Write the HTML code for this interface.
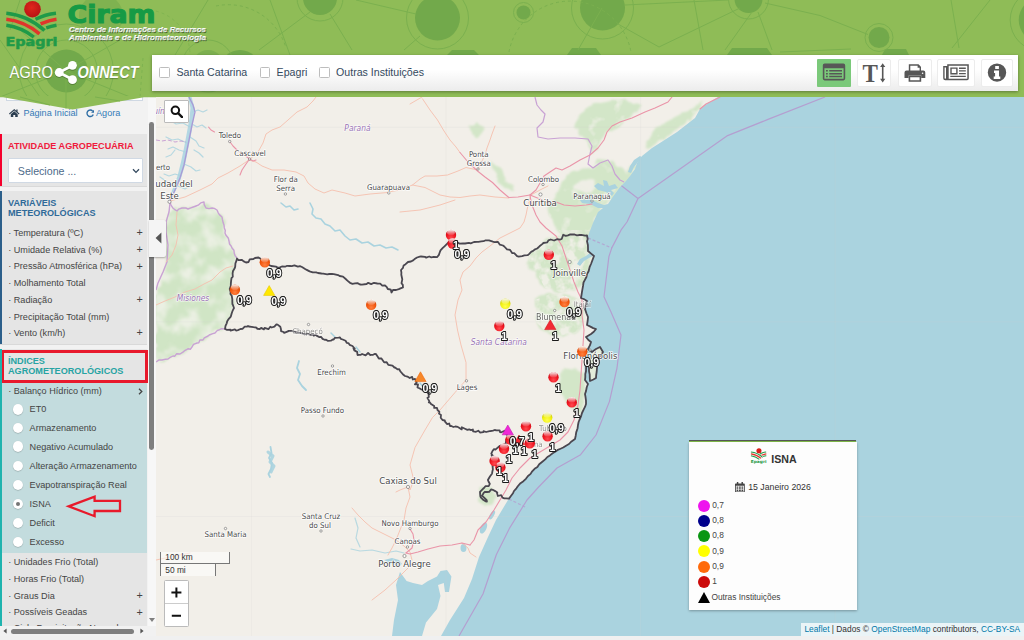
<!DOCTYPE html>
<html lang="pt-br">
<head>
<meta charset="utf-8">
<title>Agroconnect - Epagri/Ciram</title>
<style>
*{box-sizing:border-box;margin:0;padding:0}
html,body{width:1024px;height:640px;overflow:hidden;background:#f0f0f0;font-family:"Liberation Sans",Arial,sans-serif;}
.abs{position:absolute}
#page{position:relative;width:1024px;height:640px;overflow:hidden;background:#f0f0f0}
/* header */
#header{position:absolute;left:0;top:0;width:1024px;height:97px;background:#8fbc57;overflow:hidden;z-index:5}
#hv{position:absolute;left:0;top:96px;width:156px;height:16px;z-index:6}
#toolbar{position:absolute;left:152px;top:54.5px;width:865.8px;height:36.3px;background:linear-gradient(#ffffff 40%,#ececec);box-shadow:0 1px 3px rgba(0,0,0,.35);z-index:7}
.cb{position:absolute;top:12.3px;width:10.6px;height:10.8px;border:1px solid #bdbdbd;background:#fff;border-radius:1.5px}
.cbl{position:absolute;top:9.3px;font-size:10.64px;color:#34495e;line-height:16px;white-space:nowrap}
.tb{position:absolute;top:5px;width:36px;height:27px;background:#fff;border-radius:2px;}
/* sidebar */
#side{position:absolute;left:0;top:97px;width:156px;height:543px;background:#f2f2f2;z-index:3;overflow:hidden}
#sidein{position:absolute;left:0;top:0;width:147.5px;height:529px;overflow:hidden}
.sec{position:absolute;left:0;width:147px;background:#e5e5e5;border-bottom:1px solid #d9d9d9}
.sec .bar{position:absolute;left:0;top:0;bottom:0;width:2px}
.stitle{position:absolute;left:8px;font-weight:bold;font-size:9.12px;line-height:10.4px;white-space:nowrap}
.it{position:absolute;left:8.2px;font-size:9.12px;line-height:12px;color:#444;white-space:nowrap}
.plus{position:absolute;left:136.4px;font-size:10.8px;line-height:12px;color:#444;font-weight:normal}
.radio{position:absolute;left:12.7px;width:10.6px;height:10.6px;border-radius:50%;background:#fff;box-shadow:0 .5px 1px rgba(0,0,0,.3)}
.radio i{position:absolute;left:3.15px;top:3.15px;width:4.3px;height:4.3px;border-radius:50%;background:#757575}
.rl{position:absolute;left:29.6px;font-size:9.12px;line-height:12px;color:#444;white-space:nowrap}
/* map */
#map{position:absolute;left:156px;top:97px;width:868px;height:539px;background:#f2efe9;overflow:hidden;z-index:1}
#legend{position:absolute;left:689px;top:441.5px;width:167.5px;height:168px;background:#fdfdfd;box-shadow:0 1px 2.5px rgba(0,0,0,.3);z-index:4}
.lc{position:absolute;left:9px;width:12px;height:12px;border-radius:50%}
.lt{position:absolute;left:23.2px;font-size:8.36px;line-height:12px;color:#444;white-space:nowrap}
.lf{position:absolute;background:rgba(255,255,255,.8);z-index:4}
</style>
</head>
<body>
<div id="page">

<!-- MAP -->
<div id="map">
<svg id="mapsvg" class="abs" style="left:0;top:0" width="868" height="539" viewBox="156 97 868 539">
<defs><filter id="gb" x="-10%" y="-10%" width="120%" height="120%"><feTurbulence type="fractalNoise" baseFrequency=".09" numOctaves="2" seed="4" result="n"/><feDisplacementMap in="SourceGraphic" in2="n" scale="9" xChannelSelector="R" yChannelSelector="G" result="d"/><feGaussianBlur in="d" stdDeviation=".9"/></filter><filter id="gp" x="0" y="0" width="100%" height="100%"><feTurbulence type="fractalNoise" baseFrequency=".07" numOctaves="3" seed="9" result="n"/><feColorMatrix in="n" type="matrix" values="0 0 0 0 0  0 0 0 0 0  0 0 0 0 0  3.5 0 0 0 -2.05" result="m"/><feComposite in="SourceGraphic" in2="m" operator="in"/><feGaussianBlur stdDeviation=".7"/></filter><filter id="gp3" x="0" y="0" width="100%" height="100%"><feTurbulence type="fractalNoise" baseFrequency=".1" numOctaves="3" seed="33" result="n"/><feColorMatrix in="n" type="matrix" values="0 0 0 0 0  0 0 0 0 0  0 0 0 0 0  4 0 0 0 -1.55" result="m"/><feComposite in="SourceGraphic" in2="m" operator="in"/><feGaussianBlur stdDeviation=".6"/></filter><filter id="gp2" x="0" y="0" width="100%" height="100%"><feTurbulence type="fractalNoise" baseFrequency=".06" numOctaves="3" seed="21" result="n"/><feColorMatrix in="n" type="matrix" values="0 0 0 0 0  0 0 0 0 0  0 0 0 0 0  3.2 0 0 0 -1.35" result="m"/><feComposite in="SourceGraphic" in2="m" operator="in"/><feGaussianBlur stdDeviation=".8"/></filter></defs>
<g filter="url(#gb)">
<path d="M172.0 208.0 L188.0 209.0 L204.0 203.0 L217.0 210.0 L223.0 218.0 L225.0 233.0 L232.0 248.0 L237.0 259.0 L233.0 272.0 L230.0 290.0 L234.0 305.0 L229.0 318.0 L225.0 329.0 L215.0 331.0 L207.0 337.0 L195.0 345.0 L185.0 352.0 L172.0 358.0 L156.0 364.0 L156.0 300.0 L160.0 280.0 L166.0 262.0 L166.0 230.0 L169.0 212.0Z" fill="#d0e5c5"/>
<path d="M555.0 198.0 L560.0 183.0 L571.0 172.0 L589.0 170.0 L599.0 160.0 L615.0 162.0 L626.0 172.0 L640.0 158.0 L634.0 172.0 L622.0 186.0 L610.0 201.0 L598.0 213.0 L592.0 226.0 L589.0 239.0 L563.0 236.0 L558.0 229.0 L550.0 219.0 L547.0 206.0Z" fill="#d3e6c8"/>
<path d="M581.0 110.0 L600.0 103.0 L620.0 99.0 L641.0 105.0 L626.0 121.0 L605.0 134.0 L598.0 146.0 L594.0 154.0 L584.0 137.0 L573.0 128.0Z" fill="#d3e6c8"/>
<path d="M655.0 128.0 L672.0 119.0 L692.0 109.0 L704.0 100.0 L700.0 108.0 L690.0 120.0 L672.0 133.0 L658.0 142.0 L648.0 150.0 L645.0 140.0Z" fill="#d3e6c8"/>
<path d="M470.0 124.0 L478.0 122.0 L484.0 130.0 L480.0 138.0 L472.0 134.0Z" fill="#d3e6c8"/>
<path d="M490.0 160.0 L500.0 168.0 L506.0 178.0 L514.0 186.0 L512.0 192.0 L502.0 184.0 L494.0 172.0Z" fill="#d3e6c8"/>
<path d="M530.0 252.0 L545.0 241.0 L563.0 236.0 L587.0 236.0 L592.0 258.0 L586.0 280.0 L575.0 290.0 L560.0 292.0 L545.0 288.0 L538.0 275.0 L528.0 268.0Z" fill="#d3e6c8"/>
<path d="M535.0 300.0 L550.0 294.0 L566.0 296.0 L580.0 300.0 L584.0 318.0 L578.0 332.0 L562.0 338.0 L548.0 334.0 L536.0 322.0Z" fill="#d3e6c8"/>
<path d="M560.0 372.0 L575.0 368.0 L584.0 372.0 L585.0 395.0 L582.0 412.0 L570.0 408.0 L562.0 395.0Z" fill="#d3e6c8"/>
<path d="M480.0 488.0 L492.0 486.0 L498.0 496.0 L490.0 508.0 L478.0 502.0Z" fill="#d3e6c8"/>
<ellipse cx="586" cy="186" rx="11" ry="7" fill="#efeee6"/>
</g>
<clipPath id="gc"><path d="M172.0 208.0 L188.0 209.0 L204.0 203.0 L217.0 210.0 L223.0 218.0 L225.0 233.0 L232.0 248.0 L237.0 259.0 L233.0 272.0 L230.0 290.0 L234.0 305.0 L229.0 318.0 L225.0 329.0 L215.0 331.0 L207.0 337.0 L195.0 345.0 L185.0 352.0 L172.0 358.0 L156.0 364.0 L156.0 300.0 L160.0 280.0 L166.0 262.0 L166.0 230.0 L169.0 212.0Z"/><path d="M555.0 198.0 L560.0 183.0 L571.0 172.0 L589.0 170.0 L599.0 160.0 L615.0 162.0 L626.0 172.0 L640.0 158.0 L634.0 172.0 L622.0 186.0 L610.0 201.0 L598.0 213.0 L592.0 226.0 L589.0 239.0 L563.0 236.0 L558.0 229.0 L550.0 219.0 L547.0 206.0Z"/><path d="M581.0 110.0 L600.0 103.0 L620.0 99.0 L641.0 105.0 L626.0 121.0 L605.0 134.0 L598.0 146.0 L594.0 154.0 L584.0 137.0 L573.0 128.0Z"/><path d="M655.0 128.0 L672.0 119.0 L692.0 109.0 L704.0 100.0 L700.0 108.0 L690.0 120.0 L672.0 133.0 L658.0 142.0 L648.0 150.0 L645.0 140.0Z"/><path d="M470.0 124.0 L478.0 122.0 L484.0 130.0 L480.0 138.0 L472.0 134.0Z"/><path d="M490.0 160.0 L500.0 168.0 L506.0 178.0 L514.0 186.0 L512.0 192.0 L502.0 184.0 L494.0 172.0Z"/><path d="M530.0 252.0 L545.0 241.0 L563.0 236.0 L587.0 236.0 L592.0 258.0 L586.0 280.0 L575.0 290.0 L560.0 292.0 L545.0 288.0 L538.0 275.0 L528.0 268.0Z"/><path d="M535.0 300.0 L550.0 294.0 L566.0 296.0 L580.0 300.0 L584.0 318.0 L578.0 332.0 L562.0 338.0 L548.0 334.0 L536.0 322.0Z"/><path d="M560.0 372.0 L575.0 368.0 L584.0 372.0 L585.0 395.0 L582.0 412.0 L570.0 408.0 L562.0 395.0Z"/><path d="M480.0 488.0 L492.0 486.0 L498.0 496.0 L490.0 508.0 L478.0 502.0Z"/></clipPath>
<g clip-path="url(#gc)"><g filter="url(#gp2)" fill="#ebf0e3"><path d="M156 200 H245 V370 H156Z"/></g><g filter="url(#gp)" fill="#ecefe3"><path d="M545 100 H705 V240 H545Z"/></g><g filter="url(#gp3)" fill="#eeefe5"><path d="M520 230 H600 V345 H520Z"/></g></g>
<path d="M718.0 97.0 L708.0 103.0 L700.0 109.0 L695.0 118.0 L686.0 125.0 L677.0 132.0 L663.0 141.0 L652.0 148.0 L642.0 156.0 L637.0 163.0 L635.0 169.0 L630.0 176.0 L626.0 181.0 L620.0 187.0 L612.0 198.0 L608.0 204.0 L598.0 212.0 L593.0 223.0 L588.0 236.0 L588.0 251.0 L594.0 256.0 L591.0 264.0 L587.0 274.0 L583.0 286.0 L581.0 298.0 L587.0 301.0 L585.0 309.0 L588.0 317.0 L587.0 325.0 L596.0 329.0 L591.0 334.0 L586.0 337.0 L591.0 342.0 L588.0 349.0 L584.0 359.0 L585.0 380.0 L588.0 384.0 L585.0 394.0 L586.0 404.0 L582.0 413.0 L578.0 425.0 L575.0 439.0 L569.0 444.0 L553.0 453.0 L542.0 462.0 L528.0 476.0 L518.0 486.0 L508.0 500.0 L496.0 520.0 L488.0 537.0 L479.0 557.0 L472.0 579.0 L464.0 598.0 L450.0 620.0 L441.0 636.0 L1024.0 636.0 L1024.0 97.0Z" fill="#aad3df"/>
<path d="M592.0 352.0 L596.0 349.0 L600.0 347.0 L603.0 352.0 L598.0 358.0 L597.0 368.0 L596.0 378.0 L590.0 381.0 L589.0 368.0 L590.0 358.0Z" fill="#f2efe9"/>
<path d="M592.0 352.0 L596.0 349.0 L600.0 347.0 L603.0 352.0 L598.0 358.0 L597.0 368.0 L596.0 378.0 L590.0 381.0 L589.0 368.0 L590.0 358.0Z" fill="#d9ead0" opacity=".6"/>
<path d="M400.0 572.0 L406.6 581.0 L413.0 583.0 L422.0 585.0 L428.0 581.0 L437.0 576.6 L440.5 571.0 L447.0 570.0 L451.4 576.6 L449.0 592.0 L445.0 592.0 L443.8 583.0 L438.0 585.0 L440.5 596.0 L437.0 609.0 L426.0 622.5 L422.0 636.0 L392.0 636.0 L394.0 620.0 L398.0 600.0 L396.0 585.0Z" fill="#aad3df"/>
<path d="M384 560 L392 558 L399 560 L402 564 L398 566 L390 563Z" fill="#aad3df"/>
<ellipse cx="483.5" cy="528" rx="3" ry="6" transform="rotate(25 483.5 528)" fill="#aad3df"/>
<ellipse cx="492" cy="515" rx="2" ry="5" transform="rotate(30 492 515)" fill="#aad3df"/>
<ellipse cx="463.5" cy="548" rx="3" ry="4" transform="rotate(0 463.5 548)" fill="#aad3df"/>
<path d="M612 196 L606 192 L598 190 L594 186 L598 183 L604 186 L603 180 L607 181 L609 186 L615 184 L618 188 L611 190 L614 193Z" fill="#aad3df"/>
<path d="M580 200 L590 199 L598 203 L604 205 L608 204 L606 208 L598 208 L590 204 L582 203Z" fill="#aad3df"/>
<path d="M640 156 L634 160 L630 166 L628 172 L631 173 L634 167 L638 162 L643 158Z" fill="#aad3df"/>
<path d="M591 252 L586 256 L580 259 L577 264 L580 266 L584 261 L589 258 L593 256Z" fill="#aad3df"/>
<path d="M188 97 L191.5 97 L195 109 L193.5 120 L191 135 L188 150 L185 165 L180.5 180 L175 192 L171 200 L168.5 199 L173 188 L177.500 176 L181 162 L184 148 L187 132 L189.500 118 L190.5 108Z" fill="#b3d7e3"/>
<path d="M193 112 L198 110 L203 112 L207 110 M192 124 L197 127 L202 125 L206 128 M190 137 L196 141 L199 146 L204 148 M186 152 L179 150 L173 147 L168 149 M184 164 L191 167 L196 171 L200 170 M181 176 L175 174 L169 176 L164 174 M187 143 L178 139 L172 140 L166 137 M190 127 L183 123 L176 124 L171 121 M178 186 L185 189 L190 186 M160 177 L166 181 L171 185 M175 150 L171 155 L166 157 M194 150 L199 153 L203 157" stroke="#aad3df" fill="none" stroke-linecap="round" stroke-linejoin="round" stroke-width="1.2" opacity=".85"/>
<path d="M281 203 L286 207 L290 206 L294 210 L298 209 M310 203 L313 209 L312 214 L316 218 L321 219 L325 224 L330 226 L335 231 L340 230 L345 236 L350 240 L356 239 L362 243 L368 242 L374 246 L380 245 L386 248 L392 247 L398 250" stroke="#aad3df" fill="none" stroke-linecap="round" stroke-linejoin="round" stroke-width="1.6"/>
<path d="M299 361 L297 368 L300 374 L298 380 L302 386 L306 390 M270.5 447 L271.5 453 L269 458 L272 463 L271 469 L268.500 474 L270 477" stroke="#aad3df" fill="none" stroke-linecap="round" stroke-linejoin="round" stroke-width="1.8"/>
<path d="M331 333 L335 337 M356 347 L360 352 M420 383 L424 388" stroke="#aad3df" fill="none" stroke-linecap="round" stroke-linejoin="round" stroke-width="1.5"/>
<path d="M351 549 L360 551 L372 550 L385 553 L396 551 L404 553 M355 518 L358 528 L356 538 L360 547" stroke="#aad3df" fill="none" stroke-linecap="round" stroke-linejoin="round" stroke-width="1.2" opacity=".8"/>
<path d="M268 452 L273 456 L270 462 L274 466 L271 472" stroke="#aad3df" fill="none" stroke-linecap="round" stroke-linejoin="round" stroke-width="3" opacity=".9"/>
<path d="M251.4 97 V636 M446 97 V636 M640.6 97 V636 M835.2 97 V636 M156 127.3 H1024 M156 321.9 H1024 M156 516.5 H1024" stroke="#d0d0d0" stroke-opacity=".2" stroke-width=".9" fill="none"/>
<path d="M189 97 L193 105 L195 112 L192 125 L190 135 L187 150 L184 165 L180 178 L175 190 L170 201" stroke="#a99ad6" stroke-width="1.3" fill="none"/>
<path d="M170.0 202.0 L171.0 205.0 L172.6 207.7 L174.4 209.3 L177.0 211.0 L178.8 209.1 L182.0 208.0 L185.8 208.0 L188.0 209.0 L190.9 207.9 L193.3 207.0 L196.0 206.0 L198.2 205.2 L200.7 202.9 L204.0 202.0 L204.2 204.6 L206.0 208.0 L208.9 208.6 L212.0 208.0 L214.3 208.4 L217.0 210.0 L218.3 213.1 L219.6 214.9 L222.0 217.0 L222.5 219.9 L223.1 222.6 L224.0 225.0 L224.3 227.9 L225.3 230.5 L225.0 233.0 L225.8 235.0 L228.4 238.3 L229.0 241.0 L229.5 244.0 L231.1 246.0 L232.0 248.0 L233.9 250.2 L234.3 253.6 L235.2 255.9 L237.0 258.0" stroke="#c9a2d4" fill="none" stroke-linejoin="round" stroke-width="1.4"/>
<path d="M225.0 329.0 L221.5 328.6 L219.0 330.0 L217.4 330.4 L215.0 333.0 L212.8 333.7 L209.2 335.0 L208.0 336.0 L204.3 337.8 L203.0 340.0 L199.9 339.9 L198.8 342.8 L197.0 343.0 L193.5 344.3 L192.0 347.0 L190.3 349.2 L188.2 348.7 L186.0 350.0 L185.2 350.2 L182.9 352.1 L180.0 354.0 L176.7 353.7 L174.8 356.2 L173.0 356.0 L169.7 357.7 L168.0 359.0 L165.4 359.2 L162.0 360.0 L159.1 359.9 L156.0 362.0" stroke="#c9a2d4" fill="none" stroke-linejoin="round" stroke-width="1.4"/>
<path d="M170 203 L169 212 L166 222 L166 232 L168 245 L167 262 L163 272 L158 283 L156 290" stroke="#c9a2d4" fill="none" stroke-linejoin="round" stroke-width="1.4"/>
<path d="M156 140 L162 141 L168 140 L175 142 L181 141 L186 142" stroke="#c9a2d4" fill="none" stroke-linejoin="round" stroke-width="1" stroke-dasharray="4 2"/>
<path d="M535 97 L537 105 L541 110 L545 114 L543 122 L537 128 L538 137 L548 139 L560 138 L575 138 L588 139 L592 146 L590 154 L588 164 L593 168 L600 163 L608 160 L612 166 L615 174 L620 180 L624 182" stroke="#c9a2d4" fill="none" stroke-linejoin="round" stroke-width="1.2"/>
<path d="M825 97 L768 119.4 L727.6 135.6 L638 198.5 L627 222 L621.5 229.3 L611.8 247.9 L608.9 256.6 L604 296.7 L611 312 L621 335 L617 368 L609.4 401.6 L596 435 L580.6 454.7 L557 468 L537.7 488 L527 500 L509.4 528.4 L496.3 554.7 L483 594 L459 636" stroke="#b49fd0" fill="none" stroke-width="1.2" stroke-linejoin="round"/>
<path d="M621.5 185.8 L638 198.5" stroke="#b49fd0" fill="none" stroke-width="1.2" stroke-linejoin="round"/>
<path d="M588 238 L611.8 247.9 M509 499 L527 508" stroke="#b49fd0" fill="none" stroke-width="1.2" stroke-linejoin="round" stroke-dasharray="3 2" opacity=".8"/>
<path d="M170.0 201.0 L185.0 197.0 L200.0 190.0 L212.0 184.0 L218.0 178.0 L228.0 173.0 L240.0 166.0 L249.0 160.0" stroke="#f5c0ae" fill="none" stroke-width=".9" stroke-linejoin="round" stroke-linecap="round"/>
<path d="M249.0 160.0 L258.0 152.0 L263.0 143.0 L266.0 134.0 L272.0 130.0 L280.0 127.0 L288.0 120.0 L297.0 112.0 L307.0 107.0 L313.0 101.0 L316.0 97.0" stroke="#f5c0ae" fill="none" stroke-width=".9" stroke-linejoin="round" stroke-linecap="round"/>
<path d="M249.0 160.0 L256.0 162.0 L262.0 166.0 L272.0 170.0 L284.0 170.0 L296.0 172.0 L304.0 176.0 L308.0 183.0 L315.0 189.0 L324.0 193.0 L332.0 190.0 L345.0 193.0 L355.0 196.0 L370.0 194.0 L388.0 192.5" stroke="#f5c0ae" fill="none" stroke-width=".9" stroke-linejoin="round" stroke-linecap="round"/>
<path d="M388.0 192.0 L400.0 190.0 L412.5 185.0 L420.0 179.0 L425.0 176.0 L437.0 176.0 L447.5 175.0 L458.0 171.0 L466.0 167.5 L477.5 170.0" stroke="#f5c0ae" fill="none" stroke-width=".9" stroke-linejoin="round" stroke-linecap="round"/>
<path d="M412.5 185.0 L425.0 187.5 L432.0 191.0 L440.0 195.0 L450.0 197.0 L460.0 197.5 L470.0 196.0 L480.0 195.0 L495.0 197.0 L508.8 198.0" stroke="#f5c0ae" fill="none" stroke-width=".9" stroke-linejoin="round" stroke-linecap="round"/>
<path d="M422.5 98.8 L430.0 110.0 L437.5 120.0 L444.0 131.0 L450.0 140.0 L456.0 147.0 L460.0 152.5" stroke="#f5c0ae" fill="none" stroke-width=".9" stroke-linejoin="round" stroke-linecap="round"/>
<path d="M495.0 126.0 L492.0 134.0 L490.0 140.0 L487.0 148.0 L485.0 155.0 L481.0 163.0 L478.0 169.0" stroke="#f5c0ae" fill="none" stroke-width=".9" stroke-linejoin="round" stroke-linecap="round"/>
<path d="M422.0 97.0 L410.0 104.0" stroke="#f5c0ae" fill="none" stroke-width=".9" stroke-linejoin="round" stroke-linecap="round"/>
<path d="M531.0 195.0 L528.0 205.0 L526.0 215.0 L524.0 222.0 L520.0 228.0 L512.0 232.0 L500.0 238.0 L490.0 246.0 L482.0 252.0 L476.0 258.0 L470.0 266.0 L463.0 272.0 L460.0 280.0 L462.0 290.0 L458.0 300.0 L455.0 315.0 L457.5 330.0 L461.0 345.0 L466.0 362.5 L466.0 380.0 L455.0 392.5 L440.0 410.0 L432.5 417.5 L425.0 430.0 L415.0 447.5 L410.0 465.0 L413.8 480.0 L410.0 490.0 L408.0 487.0" stroke="#f5c0ae" fill="none" stroke-width=".9" stroke-linejoin="round" stroke-linecap="round"/>
<path d="M531.0 195.0 L540.0 190.0 L548.0 186.0" stroke="#f5c0ae" fill="none" stroke-width=".9" stroke-linejoin="round" stroke-linecap="round"/>
<path d="M400.0 212.0 L420.0 210.0 L440.0 205.0 L455.0 200.0" stroke="#f5c0ae" fill="none" stroke-width=".9" stroke-linejoin="round" stroke-linecap="round"/>
<path d="M156.0 305.0 L165.0 301.0 L175.0 297.0 L185.0 292.0 L195.0 289.0 L204.0 284.0 L212.0 280.0 L220.0 272.0 L226.0 268.0 L233.0 266.0" stroke="#f5c0ae" fill="none" stroke-width=".9" stroke-linejoin="round" stroke-linecap="round"/>
<path d="M166.0 262.0 L172.0 255.0 L176.0 245.0 L178.0 235.0 L176.0 225.0 L177.0 212.0" stroke="#f5c0ae" fill="none" stroke-width=".9" stroke-linejoin="round" stroke-linecap="round"/>
<path d="M408.0 487.0 L410.0 497.0 L406.0 508.0 L404.0 520.0 L400.0 530.0 L396.0 540.0 L392.0 548.0 L388.0 555.0" stroke="#f5c0ae" fill="none" stroke-width=".9" stroke-linejoin="round" stroke-linecap="round"/>
<path d="M352.0 508.0 L358.0 515.0 L365.0 522.0 L372.0 528.0 L380.0 532.0 L388.0 536.0 L396.0 540.0 L404.0 546.0 L410.0 552.0 L412.0 560.0" stroke="#f5c0ae" fill="none" stroke-width=".9" stroke-linejoin="round" stroke-linecap="round"/>
<path d="M408.0 487.0 L400.0 490.0 L396.0 492.0" stroke="#f5c0ae" fill="none" stroke-width=".9" stroke-linejoin="round" stroke-linecap="round"/>
<path d="M156.0 560.0 L175.0 556.0 L190.0 553.0" stroke="#f5c0ae" fill="none" stroke-width=".9" stroke-linejoin="round" stroke-linecap="round"/>
<path d="M372.0 600.0 L385.0 590.0 L396.0 580.0 L404.0 572.0 L410.0 566.0" stroke="#f5c0ae" fill="none" stroke-width=".9" stroke-linejoin="round" stroke-linecap="round"/>
<path d="M462.0 543.0 L468.0 548.0 L470.0 553.0 L476.0 557.0" stroke="#f5c0ae" fill="none" stroke-width=".9" stroke-linejoin="round" stroke-linecap="round"/>
<path d="M460.0 152.5 L468.0 162.0 L477.5 171.0 L485.0 177.0 L492.5 182.5 L500.0 190.0 L508.8 197.5 L518.0 197.0 L530.0 195.0" stroke="#ea94a8" fill="none" stroke-width="1.1" stroke-linejoin="round" stroke-linecap="round"/>
<path d="M530.0 195.0 L536.0 190.0 L540.0 183.0 L544.0 176.0 L550.0 172.0 L556.0 168.0 L562.0 170.0 L570.0 166.0 L580.0 160.0 L590.0 155.0 L598.0 148.0 L604.0 140.0 L607.0 132.0 L612.0 126.0 L620.0 122.0 L632.0 118.0 L645.0 112.0 L655.0 108.0 L668.0 102.0 L672.0 97.0" stroke="#ea94a8" fill="none" stroke-width="1.1" stroke-linejoin="round" stroke-linecap="round"/>
<path d="M530.0 195.0 L540.0 199.0 L548.0 203.0 L556.0 202.0 L564.0 205.0 L575.0 206.0 L586.0 205.0 L592.0 204.0" stroke="#ea94a8" fill="none" stroke-width="1.1" stroke-linejoin="round" stroke-linecap="round"/>
<path d="M530.0 196.0 L532.0 205.0 L536.0 215.0 L540.0 222.0 L546.0 228.0 L556.0 236.0 L562.0 246.0 L566.0 258.0 L570.0 270.0 L574.0 282.0 L578.0 292.0 L582.0 300.0 L582.0 315.0 L584.0 330.0 L583.0 345.0 L582.0 360.0 L581.0 375.0 L580.0 390.0 L578.0 405.0 L574.0 420.0 L568.0 432.0 L560.0 440.0 L550.0 446.0 L540.0 452.0 L530.0 458.0 L520.0 468.0 L512.0 478.0 L506.0 490.0 L500.0 500.0 L494.0 510.0 L486.0 522.0 L478.0 530.0 L474.0 540.0 L470.0 545.0" stroke="#ea94a8" fill="none" stroke-width="1.1" stroke-linejoin="round" stroke-linecap="round"/>
<path d="M470.0 545.0 L462.0 543.0 L452.0 545.0 L440.0 546.0 L428.0 549.0 L418.0 552.0 L410.0 554.0 L406.0 553.0" stroke="#ea94a8" fill="none" stroke-width="1.1" stroke-linejoin="round" stroke-linecap="round"/>
<path d="M406.0 553.0 L412.0 548.0 L414.0 540.0 L413.0 534.0 L410.0 529.0" stroke="#ea94a8" fill="none" stroke-width="1.1" stroke-linejoin="round" stroke-linecap="round"/>
<path d="M229.7 141.5 L233.0 146.0 L238.0 151.0 L243.0 154.0 L249.6 159.0 L253.0 161.0 L256.0 160.0" stroke="#ea94a8" fill="none" stroke-width="1.1" stroke-linejoin="round" stroke-linecap="round"/>
<path d="M249.6 159.0 L246.0 164.0 L242.0 170.0 L240.0 175.0" stroke="#ea94a8" fill="none" stroke-width="1.1" stroke-linejoin="round" stroke-linecap="round"/>
<path d="M208.6 127.2 L211.0 130.0 L214.5 132.0" stroke="#ea94a8" fill="none" stroke-width="1.1" stroke-linejoin="round" stroke-linecap="round"/>
<path d="M700.0 109.0 L706.0 104.0 L714.0 100.0 L720.0 97.0" stroke="#ea94a8" fill="none" stroke-width="1.1" stroke-linejoin="round" stroke-linecap="round"/>
<path d="M237.0 258.5 L238.5 260.2 L242.0 260.0 L243.7 261.4 L246.0 262.5 L248.6 262.0 L249.7 259.3 L253.4 259.0 L255.0 258.0 L258.5 257.5 L261.0 259.0 L262.9 260.9 L264.5 262.9 L267.8 262.6 L269.0 265.0 L271.1 266.0 L275.9 266.6 L278.0 267.8 L279.8 267.3 L281.9 266.5 L285.1 266.7 L287.1 265.8 L290.0 266.0 L291.8 266.1 L294.4 265.4 L297.9 266.7 L299.9 266.2 L302.0 267.0 L305.5 269.2 L306.3 269.6 L309.6 271.4 L312.8 272.4 L316.1 272.3 L318.0 273.0 L321.5 273.5 L323.2 273.6 L327.2 274.3 L329.2 274.0 L332.0 274.0 L333.8 274.1 L338.1 275.1 L339.6 276.0 L343.0 276.6 L345.7 279.0 L347.4 280.6 L350.0 282.8 L352.5 283.8 L355.0 283.4 L357.5 283.1 L360.0 284.5 L361.9 284.6 L366.6 284.0 L368.2 282.8 L371.2 284.1 L374.0 282.8 L377.3 283.5 L380.2 283.6 L382.3 285.7 L385.0 285.4 L386.8 287.1 L387.8 289.0 L390.8 289.7 L391.5 292.5 L393.0 290.0 L396.1 290.0 L398.8 289.2 L401.1 288.2 L403.0 287.5 L402.8 284.9 L401.5 283.2 L402.3 279.4 L401.9 277.5 L401.3 274.7 L401.4 272.7 L401.0 270.0 L403.0 267.9 L403.6 265.5 L405.6 264.2 L408.0 262.0 L411.0 261.5 L413.1 260.4 L414.3 259.3 L417.0 257.5 L419.8 256.6 L421.0 256.5 L425.0 256.9 L426.2 257.6 L429.2 256.5 L431.3 257.3 L433.8 256.8 L437.0 257.2 L438.9 254.9 L439.6 252.8 L440.5 250.4 L442.8 247.9 L444.5 246.3 L446.0 244.9 L449.0 242.0 L451.8 241.7 L454.8 243.2 L456.4 241.9 L459.5 243.6 L463.0 243.4 L465.1 243.5 L468.9 242.8 L470.7 243.3 L474.0 242.0 L477.1 241.8 L478.4 241.8 L481.3 241.4 L483.6 241.2 L485.6 240.3 L489.0 240.4 L492.9 241.7 L494.6 242.2 L498.0 242.0 L499.9 244.7 L503.0 245.5 L504.3 246.5 L507.0 249.3 L510.1 249.9 L512.3 253.2 L514.2 253.1 L517.1 256.2 L518.7 256.7 L522.1 256.2 L524.4 255.4 L527.6 255.2 L529.0 254.1 L531.4 251.6 L532.8 251.1 L535.1 249.3 L537.2 248.5 L539.5 246.3 L542.5 243.9 L543.4 243.0 L547.1 242.4 L548.4 240.4 L550.7 239.5 L554.1 240.5 L557.2 239.2 L559.8 239.7 L561.7 239.0 L563.2 234.8 L565.8 235.8 L568.0 235.4 L570.3 234.4 L574.6 234.5 L576.9 235.4 L579.7 235.0 L581.4 234.9 L585.1 235.6 L587.0 235.5 L587.7 239.0 L587.0 241.3 L587.9 245.0 L588.0 247.7 L588.0 251.0 L591.1 253.6 L594.0 256.0 L592.6 259.7 L591.0 264.0 L589.6 267.2 L588.6 271.2 L587.0 274.0 L586.4 277.0 L584.9 279.8 L583.5 282.5 L583.0 286.0 L582.5 288.8 L581.9 292.4 L581.5 295.1 L581.0 298.0 L583.7 299.0 L587.0 301.0 L585.8 304.6 L585.0 309.0 L586.5 313.5 L588.0 317.0 L587.7 320.7 L587.0 325.0 L590.4 326.6 L593.2 328.1 L596.0 329.0 L593.8 331.8 L591.0 334.0 L586.0 337.0 L588.4 340.0 L591.0 342.0 L590.0 345.2 L588.0 349.0 L592.0 352.0 L596.0 349.0 L600.0 347.0 L603.0 352.0 L600.8 355.2 L598.0 358.0 L597.6 361.4 L597.3 365.1 L597.0 368.0 L596.7 371.7 L596.2 375.0 L596.0 378.0 L593.4 379.5 L590.0 381.0 L589.8 378.2 L589.7 374.5 L589.0 371.1 L589.0 368.0 L587.7 364.7 L586.0 362.0 L586.2 364.8 L586.1 367.8 L586.0 371.2 L585.3 374.0 L585.3 377.1 L585.0 380.0 L588.0 384.0 L586.8 387.0 L586.0 391.1 L585.0 394.0 L585.5 396.9 L586.0 400.9 L586.0 404.0 L585.1 406.7 L583.6 409.6 L582.0 413.0 L581.2 415.8 L579.7 419.4 L578.6 422.0 L578.0 425.0 L577.6 428.2 L576.2 432.4 L575.7 435.7 L575.0 439.0 L571.5 441.4 L569.0 444.0 L566.0 445.7 L563.2 447.5 L560.5 448.7 L557.9 449.8 L556.0 451.2 L553.0 453.0 L549.9 455.4 L547.4 457.0 L545.2 459.4 L542.0 462.0 L539.2 464.2 L537.4 466.9 L534.6 468.8 L532.2 471.3 L530.6 473.9 L528.0 476.0 L525.9 478.8 L523.4 481.2 L520.5 483.2 L518.0 486.0 L516.4 488.3 L514.0 491.0 L513.0 493.2 L510.9 496.0 L509.0 498.6 L506.1 498.4 L504.3 498.3 L502.5 497.7 L501.2 495.2 L497.9 496.0 L497.0 493.0 L497.3 492.4 L495.2 491.1 L492.7 489.8 L491.2 489.4 L489.2 491.8 L487.0 492.0 L485.0 491.8 L484.0 492.6 L482.0 495.7 L483.9 497.4 L483.9 497.4 L486.7 500.1 L486.9 501.6 L485.5 501.3 L483.5 500.1 L481.0 497.7 L480.4 496.5 L480.2 494.9 L480.0 491.8 L483.0 488.8 L484.0 488.0 L485.4 486.2 L488.8 486.0 L489.8 483.8 L488.5 481.5 L487.9 480.0 L489.2 477.7 L490.1 476.2 L491.8 474.0 L492.1 473.2 L492.4 471.3 L492.9 469.6 L492.5 465.4 L493.1 465.7 L493.2 462.7 L492.8 459.8 L493.2 458.9 L491.7 455.6 L493.3 456.2 L491.3 453.7 L492.5 451.0 L494.0 449.1 L495.4 449.7 L498.6 446.8 L499.7 445.8 L501.7 445.5 L503.8 446.3 L504.5 444.0 L505.7 443.7 L506.3 439.5 L508.0 439.0 L507.7 435.4 L506.1 434.1 L506.4 432.0 L504.7 430.7 L501.3 432.3 L500.0 432.2 L499.7 430.3 L496.5 430.4 L494.7 430.0 L493.0 430.6 L490.7 431.0 L489.6 431.1 L486.1 432.0 L483.5 431.2 L483.4 432.2 L480.0 432.5 L478.3 430.7 L476.0 431.8 L473.1 431.4 L472.9 429.5 L471.0 430.1 L469.2 429.3 L467.4 429.9 L465.0 428.8 L461.8 427.3 L461.7 429.4 L458.7 427.6 L457.8 426.9 L455.3 426.5 L453.4 427.0 L451.3 426.0 L450.0 426.0 L449.2 423.5 L447.2 424.2 L445.0 421.7 L444.8 420.5 L442.5 420.0 L440.7 417.8 L441.0 414.9 L439.0 413.6 L439.4 411.8 L437.5 410.0 L437.0 407.9 L434.2 407.9 L434.2 406.1 L431.0 404.0 L430.3 402.9 L428.8 402.5 L429.4 401.4 L427.4 397.9 L428.8 396.9 L428.6 394.1 L427.5 392.5 L424.5 390.9 L424.3 389.9 L421.1 389.3 L419.3 388.3 L417.5 387.5 L418.0 384.4 L414.9 384.3 L416.7 382.3 L415.0 378.8 L412.8 379.5 L412.2 376.9 L409.7 378.0 L407.4 376.6 L405.0 376.0 L402.8 374.2 L400.9 372.0 L400.2 371.2 L399.2 369.1 L397.8 369.4 L395.0 367.5 L394.4 367.5 L392.5 365.6 L388.3 364.9 L387.0 362.7 L386.5 362.2 L384.1 362.3 L382.5 360.0 L381.3 358.3 L378.8 358.5 L377.9 357.0 L376.1 354.2 L375.0 353.8 L373.1 354.8 L370.2 354.9 L370.3 355.0 L368.1 353.0 L365.6 355.4 L362.1 354.0 L360.8 354.8 L359.2 354.8 L357.5 355.0 L357.2 351.9 L354.3 350.4 L353.5 348.4 L354.8 348.8 L352.5 346.0 L349.6 344.8 L348.4 343.1 L346.7 342.8 L345.6 340.8 L342.7 339.5 L340.8 338.9 L340.0 337.5 L338.6 337.7 L334.9 337.8 L333.7 339.5 L332.8 339.4 L330.8 340.7 L328.0 340.9 L326.1 339.7 L324.6 339.8 L322.6 338.9 L321.0 336.8 L319.5 337.2 L316.6 335.6 L316.0 335.0 L313.7 335.7 L313.1 334.1 L310.9 334.9 L307.1 333.7 L304.7 334.3 L304.1 334.2 L302.4 333.4 L300.2 332.8 L296.4 332.5 L295.4 332.0 L292.1 331.0 L292.2 330.8 L288.3 330.9 L288.5 331.1 L284.2 332.9 L283.5 332.0 L281.0 331.1 L281.0 329.2 L280.3 326.7 L277.6 324.6 L276.4 324.3 L274.4 326.6 L271.7 327.5 L270.3 326.7 L268.4 329.2 L264.6 327.8 L263.9 329.4 L261.1 327.9 L259.8 329.0 L257.2 328.8 L256.6 327.7 L253.5 327.2 L251.5 326.8 L248.8 326.5 L248.0 326.0 L247.3 326.5 L244.7 326.6 L242.5 328.9 L240.5 329.0 L238.0 330.1 L236.0 330.5 L234.9 329.3 L230.5 330.6 L230.5 329.6 L227.0 329.9 L225.0 329.0 L225.5 325.8 L226.7 323.3 L227.2 321.2 L228.8 318.8 L230.8 316.6 L231.8 313.0 L232.8 310.3 L234.0 308.0 L232.9 305.0 L232.4 304.0 L232.3 301.0 L232.3 299.1 L231.7 295.7 L230.4 294.0 L230.6 292.0 L229.7 289.0 L230.8 285.8 L230.8 284.1 L231.1 280.8 L231.5 278.1 L232.8 276.7 L232.6 273.3 L233.0 271.0 L234.5 268.6 L235.2 266.6 L235.4 263.4 L236.4 260.9 L237.0 258.5Z" fill="none" stroke="#4a4750" stroke-width="1.8" stroke-linejoin="round"/>
<defs>
<radialGradient id="so" cx=".5" cy=".75" r=".7"><stop offset="0" stop-color="#ff8040"/><stop offset=".6" stop-color="#f2560e"/><stop offset="1" stop-color="#d84400"/></radialGradient>
<radialGradient id="sr" cx=".5" cy=".75" r=".7"><stop offset="0" stop-color="#ff4a50"/><stop offset=".6" stop-color="#ee1420"/><stop offset="1" stop-color="#c80812"/></radialGradient>
<radialGradient id="sy" cx=".5" cy=".75" r=".7"><stop offset="0" stop-color="#ffff50"/><stop offset=".6" stop-color="#f0f010"/><stop offset="1" stop-color="#c8c800"/></radialGradient>
<linearGradient id="hl" x1="0" y1="0" x2="0" y2="1"><stop offset="0" stop-color="#fff" stop-opacity=".95"/><stop offset="1" stop-color="#fff" stop-opacity=".1"/></linearGradient>
</defs>
<style>.cl{font-family:"DejaVu Sans Condensed","DejaVu Sans","Liberation Sans",sans-serif;fill:#4a4a4a;stroke:#fff;stroke-opacity:.85;stroke-width:1.6px;paint-order:stroke;text-anchor:middle;stroke-linejoin:round}.il{font-family:"DejaVu Sans Condensed","DejaVu Sans","Liberation Sans",sans-serif;font-style:italic;fill:#9a74b5;stroke:#fff;stroke-opacity:.8;stroke-width:1.2px;paint-order:stroke;text-anchor:middle}.ml{font-family:"Liberation Sans",sans-serif;font-weight:bold;font-size:10.64px;fill:#fff;stroke:#1a1a1a;stroke-width:1.8px;paint-order:stroke;stroke-linejoin:round;filter:drop-shadow(.6px .8px .4px rgba(0,0,0,.7))}</style>
<circle cx="229.7" cy="141.5" r="1.2" fill="#fff" fill-opacity=".8" stroke="#666" stroke-width=".6"/>
<circle cx="249.6" cy="159.0" r="1.2" fill="#fff" fill-opacity=".8" stroke="#666" stroke-width=".6"/>
<circle cx="285.4" cy="194.0" r="1.2" fill="#fff" fill-opacity=".8" stroke="#666" stroke-width=".6"/>
<circle cx="169.5" cy="201.8" r="1.6" fill="#fff" fill-opacity=".8" stroke="#666" stroke-width=".6"/>
<circle cx="388.8" cy="193.0" r="1.2" fill="#fff" fill-opacity=".8" stroke="#666" stroke-width=".6"/>
<circle cx="478.0" cy="169.0" r="1.2" fill="#fff" fill-opacity=".8" stroke="#666" stroke-width=".6"/>
<circle cx="543.0" cy="184.5" r="1.2" fill="#fff" fill-opacity=".8" stroke="#666" stroke-width=".6"/>
<circle cx="540.5" cy="194.5" r="1.6" fill="#fff" fill-opacity=".8" stroke="#666" stroke-width=".6"/>
<circle cx="592.0" cy="201.0" r="1.2" fill="#fff" fill-opacity=".8" stroke="#666" stroke-width=".6"/>
<circle cx="569.7" cy="262.0" r="1.6" fill="#fff" fill-opacity=".8" stroke="#666" stroke-width=".6"/>
<circle cx="554.7" cy="310.5" r="1.2" fill="#fff" fill-opacity=".8" stroke="#666" stroke-width=".6"/>
<circle cx="590.0" cy="350.0" r="1.2" fill="#fff" fill-opacity=".8" stroke="#666" stroke-width=".6"/>
<circle cx="308.5" cy="324.5" r="1.2" fill="#fff" fill-opacity=".8" stroke="#666" stroke-width=".6"/>
<circle cx="332.5" cy="366.0" r="1.2" fill="#fff" fill-opacity=".8" stroke="#666" stroke-width=".6"/>
<circle cx="323.0" cy="416.0" r="1.2" fill="#fff" fill-opacity=".8" stroke="#666" stroke-width=".6"/>
<circle cx="466.5" cy="380.8" r="1.2" fill="#fff" fill-opacity=".8" stroke="#666" stroke-width=".6"/>
<circle cx="408.0" cy="487.0" r="1.6" fill="#fff" fill-opacity=".8" stroke="#666" stroke-width=".6"/>
<circle cx="321.0" cy="531.0" r="1.2" fill="#fff" fill-opacity=".8" stroke="#666" stroke-width=".6"/>
<circle cx="225.5" cy="528.5" r="1.2" fill="#fff" fill-opacity=".8" stroke="#666" stroke-width=".6"/>
<circle cx="410.0" cy="528.5" r="1.2" fill="#fff" fill-opacity=".8" stroke="#666" stroke-width=".6"/>
<circle cx="407.5" cy="547.0" r="1.2" fill="#fff" fill-opacity=".8" stroke="#666" stroke-width=".6"/>
<circle cx="404.5" cy="556.0" r="1.6" fill="#fff" fill-opacity=".8" stroke="#666" stroke-width=".6"/>
<text x="230.0" y="138.2" font-size="7.8" class="cl">Toledo</text>
<text x="250.0" y="155.8" font-size="7.8" class="cl">Cascavel</text>
<text x="285.7" y="182.2" font-size="7.8" class="cl">Flor da</text>
<text x="285.7" y="191.0" font-size="7.8" class="cl">Serra</text>
<text x="174.0" y="187.4" font-size="9.5" class="cl">udad del</text>
<text x="169.5" y="199.0" font-size="9.5" class="cl">Este</text>
<text x="163.0" y="169.8" font-size="7.8" class="cl">erto</text>
<text x="388.5" y="189.8" font-size="7.8" class="cl">Guarapuava</text>
<text x="478.8" y="157.3" font-size="7.8" class="cl">Ponta</text>
<text x="478.8" y="166.0" font-size="7.8" class="cl">Grossa</text>
<text x="543.5" y="181.8" font-size="7.8" class="cl">Colombo</text>
<text x="540.0" y="206.4" font-size="9.5" class="cl">Curitiba</text>
<text x="592.0" y="198.8" font-size="7.8" class="cl">Paranaguá</text>
<text x="569.5" y="275.8" font-size="9.5" class="cl">Joinville</text>
<text x="582.3" y="306.8" font-size="7.8" class="cl" opacity=".6">Itajaí</text>
<text x="556.0" y="320.4" font-size="8.8" class="cl" opacity=".85">Blumenau</text>
<text x="590.3" y="359.4" font-size="9.5" class="cl">Florianópolis</text>
<text x="307.5" y="333.8" font-size="7.8" class="cl" opacity=".6">Chapecó</text>
<text x="331.5" y="374.8" font-size="7.8" class="cl">Erechim</text>
<text x="322.5" y="412.8" font-size="7.8" class="cl">Passo Fundo</text>
<text x="467.0" y="389.8" font-size="7.8" class="cl">Lages</text>
<text x="553.0" y="431.3" font-size="7.8" class="cl" opacity=".6">Tubarão</text>
<text x="527.0" y="446.8" font-size="7.8" class="cl" opacity=".6">Criciúma</text>
<text x="408.0" y="483.9" font-size="9.5" class="cl">Caxias do Sul</text>
<text x="321.0" y="518.8" font-size="7.8" class="cl">Santa Cruz</text>
<text x="320.0" y="527.8" font-size="7.8" class="cl">do Sul</text>
<text x="225.5" y="537.3" font-size="7.8" class="cl">Santa Maria</text>
<text x="410.0" y="525.8" font-size="7.8" class="cl">Novo Hamburgo</text>
<text x="407.5" y="544.3" font-size="7.8" class="cl">Canoas</text>
<text x="404.5" y="566.9" font-size="9.5" class="cl">Porto Alegre</text>
<text x="357.5" y="130.5" font-size="8.4" class="il">Paraná</text>
<text x="193.0" y="300.5" font-size="8.4" class="il">Misiones</text>
<text x="498.8" y="345.0" font-size="8.4" class="il">Santa Catarina</text>
<text x="159.0" y="114.0" font-size="8.4" class="il">uín</text>
<circle cx="264.8" cy="262.2" r="5.2" fill="url(#so)"/><ellipse cx="264.8" cy="259.6" rx="3.9" ry="2.8" fill="url(#hl)"/>
<circle cx="234.9" cy="289.8" r="5.2" fill="url(#so)"/><ellipse cx="234.9" cy="287.2" rx="3.9" ry="2.8" fill="url(#hl)"/>
<path d="M269.2 285.6 L274.8 295.4 L263.6 295.4 Z" fill="#ffe800" stroke="#e8c800" stroke-width=".6" stroke-linejoin="round"/>
<circle cx="371.2" cy="304.9" r="5.2" fill="url(#so)"/><ellipse cx="371.2" cy="302.3" rx="3.9" ry="2.8" fill="url(#hl)"/>
<circle cx="451.0" cy="235.0" r="5.2" fill="url(#sr)"/><ellipse cx="451.0" cy="232.4" rx="3.9" ry="2.8" fill="url(#hl)"/>
<circle cx="452.6" cy="243.6" r="5.2" fill="url(#sr)"/><ellipse cx="452.6" cy="241.0" rx="3.9" ry="2.8" fill="url(#hl)"/>
<circle cx="548.8" cy="254.8" r="5.2" fill="url(#sr)"/><ellipse cx="548.8" cy="252.2" rx="3.9" ry="2.8" fill="url(#hl)"/>
<circle cx="505.3" cy="303.8" r="5.2" fill="url(#sy)"/><ellipse cx="505.3" cy="301.2" rx="3.9" ry="2.8" fill="url(#hl)"/>
<circle cx="564.5" cy="302.0" r="5.2" fill="url(#so)"/><ellipse cx="564.5" cy="299.4" rx="3.9" ry="2.8" fill="url(#hl)"/>
<circle cx="499.3" cy="326.0" r="5.2" fill="url(#sr)"/><ellipse cx="499.3" cy="323.4" rx="3.9" ry="2.8" fill="url(#hl)"/>
<path d="M550.3 319.8 L555.9 329.6 L544.7 329.6 Z" fill="#f22a34" stroke="#d81420" stroke-width=".6" stroke-linejoin="round"/>
<circle cx="582.3" cy="351.5" r="5.2" fill="url(#so)"/><ellipse cx="582.3" cy="348.9" rx="3.9" ry="2.8" fill="url(#hl)"/>
<path d="M420.5 371.8 L426.1 381.6 L414.9 381.6 Z" fill="#f7882a" stroke="#ee6a10" stroke-width=".6" stroke-linejoin="round"/>
<circle cx="553.5" cy="377.3" r="5.2" fill="url(#sr)"/><ellipse cx="553.5" cy="374.7" rx="3.9" ry="2.8" fill="url(#hl)"/>
<circle cx="571.8" cy="402.4" r="5.2" fill="url(#sr)"/><ellipse cx="571.8" cy="399.8" rx="3.9" ry="2.8" fill="url(#hl)"/>
<circle cx="547.2" cy="417.6" r="5.2" fill="url(#sy)"/><ellipse cx="547.2" cy="415.0" rx="3.9" ry="2.8" fill="url(#hl)"/>
<circle cx="526.0" cy="426.2" r="5.2" fill="url(#sr)"/><ellipse cx="526.0" cy="423.6" rx="3.9" ry="2.8" fill="url(#hl)"/>
<circle cx="547.6" cy="436.3" r="5.2" fill="url(#sr)"/><ellipse cx="547.6" cy="433.7" rx="3.9" ry="2.8" fill="url(#hl)"/>
<circle cx="510.5" cy="439.6" r="5.2" fill="url(#sr)"/><ellipse cx="510.5" cy="437.0" rx="3.9" ry="2.8" fill="url(#hl)"/>
<path d="M519.0 435.0 L524.6 444.8 L513.4 444.8 Z" fill="#f22a34" stroke="#d81420" stroke-width=".6" stroke-linejoin="round"/>
<circle cx="529.8" cy="443.3" r="5.2" fill="url(#sr)"/><ellipse cx="529.8" cy="440.7" rx="3.9" ry="2.8" fill="url(#hl)"/>
<circle cx="504.0" cy="448.8" r="5.2" fill="url(#sr)"/><ellipse cx="504.0" cy="446.2" rx="3.9" ry="2.8" fill="url(#hl)"/>
<circle cx="494.6" cy="461.0" r="5.2" fill="url(#sr)"/><ellipse cx="494.6" cy="458.4" rx="3.9" ry="2.8" fill="url(#hl)"/>
<circle cx="500.4" cy="467.4" r="5.2" fill="url(#sr)"/><ellipse cx="500.4" cy="464.8" rx="3.9" ry="2.8" fill="url(#hl)"/>
<path d="M507.8 425.0 L513.4 434.8 L502.2 434.8 Z" fill="#f028d8" stroke="#c81ab0" stroke-width=".6" stroke-linejoin="round"/>
<text x="266.8" y="276.6" class="ml">0,9</text>
<text x="236.9" y="304.2" class="ml">0,9</text>
<text x="271.2" y="305.4" class="ml">0,9</text>
<text x="373.2" y="319.3" class="ml">0,9</text>
<text x="453.0" y="249.4" class="ml">1</text>
<text x="454.6" y="258.0" class="ml">0,9</text>
<text x="550.8" y="269.2" class="ml">1</text>
<text x="507.3" y="318.2" class="ml">0,9</text>
<text x="566.5" y="316.4" class="ml">0,9</text>
<text x="501.3" y="340.4" class="ml">1</text>
<text x="552.3" y="339.6" class="ml">1</text>
<text x="584.3" y="365.9" class="ml">0,9</text>
<text x="422.5" y="391.6" class="ml">0,9</text>
<text x="555.5" y="391.7" class="ml">1</text>
<text x="573.8" y="416.8" class="ml">1</text>
<text x="549.2" y="432.0" class="ml">0,9</text>
<text x="528.0" y="440.6" class="ml">1</text>
<text x="549.6" y="450.7" class="ml">1</text>
<text x="512.5" y="454.0" class="ml">1</text>
<text x="521.0" y="454.8" class="ml">1</text>
<text x="531.8" y="457.7" class="ml">1</text>
<text x="506.0" y="463.2" class="ml">1</text>
<text x="496.6" y="475.4" class="ml">1</text>
<text x="502.4" y="481.8" class="ml">1</text>
<text x="509.8" y="444.8" class="ml">0,7</text>
</svg>
</div>

<!-- HEADER -->
<div id="header">
<svg class="abs" style="left:0;top:0" width="1024" height="97" viewBox="0 0 1024 97">
<g fill="#72a94b">
<circle cx="101" cy="16" r="22" opacity=".55"/>
<circle cx="66.4" cy="71" r="21.5"/>
<circle cx="320" cy="-2" r="17"/>
<circle cx="437.5" cy="18" r="22.5"/>
<circle cx="523.5" cy="12.5" r="7"/>
<circle cx="602.5" cy="8" r="22.5"/>
<circle cx="748.5" cy="-1" r="14"/>
<circle cx="879" cy="37.5" r="10.5"/>
<circle cx="1041.2" cy="20" r="22.5"/>
<circle cx="208" cy="66" r="16" opacity=".6"/>
<path d="M567 55 L572 48 L596 48 L601 55Z M727 55 L732 48 L767 48 L772 55Z M882 55 L885 49 L906 49 L909 55Z M447 55 L452 50 L474 50 L479 55Z"/><circle cx="240" cy="70" r="20"/>
</g>
<g fill="none" stroke="#7bb04f" stroke-width="1">
<circle cx="66.4" cy="71" r="31"/><circle cx="66.4" cy="71" r="47"/>
<circle cx="320" cy="-2" r="23"/>
<circle cx="437.5" cy="18" r="31"/>
<circle cx="523.5" cy="12.5" r="10"/>
<circle cx="602.5" cy="8" r="31"/>
<circle cx="748.5" cy="-1" r="20"/>
<circle cx="879" cy="37.5" r="14"/>
<circle cx="1041.2" cy="20" r="31"/>
<circle cx="208" cy="66" r="26"/>
<path d="M310 12 L259 50 M330 14 L352 50 M356 0 L416 14 M420 36 L404 50 M208 0 L175 55 M270 0 L290 55 M602 8 L578 50 M618 24 L659 47 L740 8 M752 12 L725 50 M758 12 L772 50 M625 5 L728 0 M694 0 L703 50 M765 3 L820 15.5 L868 34.5 M951 0 L959 48 M990 0 L952 48 M780 52 L851 49 M0 40 L40 97 M66 71 L0 97 M66 71 L20 30 M66 71 L120 40 M66 71 L130 97 M66 71 L66 110 M20 0 L10 30"/>
<path d="M216 6 A60 60 0 0 1 286 48" stroke-dasharray="3 3"/>
<path d="M509 52 A62 62 0 0 1 631 52" stroke-dasharray="3 3"/>
<path d="M150 10 A45 45 0 0 1 190 55" stroke-dasharray="3 3" opacity=".7"/>
<path d="M143 58 L140 97" stroke-dasharray="3 3" opacity=".8"/>
</g>
<!-- Epagri logo -->
<g>
<defs><radialGradient id="rg" cx=".45" cy=".4" r=".6"><stop offset="0" stop-color="#e0251c"/><stop offset="1" stop-color="#b81414"/></radialGradient></defs>
<circle cx="32.5" cy="9.2" r="8.3" fill="url(#rg)"/>
<g fill="none" stroke-width="3.5">
<path d="M6.3 13.2 C20 14.5 33 20 44.5 30.5" stroke="#1f9a48"/>
<path d="M6.3 19.2 C18 20.5 29 25 39.5 33.8" stroke="#e0352b"/>
<path d="M6.3 25.2 C16 26.5 25 30 33.8 37" stroke="#1f9a48"/>
<path d="M35.5 19.3 C42 16 48 14 56 13.2" stroke="#1f9a48"/>
<path d="M40.6 23.8 C46 21.5 50 20 56.5 19.2" stroke="#e0352b"/>
<path d="M46.3 27.8 C50 26.5 53 25.8 56.5 25.2" stroke="#1f9a48"/>
</g>
<text x="5.5" y="45.6" font-family="'DejaVu Sans','Liberation Sans',sans-serif" font-weight="bold" font-size="11.6" fill="#1f9a48" stroke="#1f9a48" stroke-width=".5" textLength="52" lengthAdjust="spacingAndGlyphs">Epagri</text>
<text x="67.5" y="23.4" font-family="'DejaVu Sans','Liberation Sans',sans-serif" font-weight="bold" font-size="24.4" fill="#169a45" stroke="#169a45" stroke-width="1.1" textLength="88" lengthAdjust="spacingAndGlyphs">Ciram</text>
<g font-family="'Liberation Sans',sans-serif" font-weight="bold" font-style="italic" font-size="6.6" fill="#fff" stroke="#fff" stroke-width=".25" style="text-shadow:.6px .8px .6px rgba(60,90,40,.9)">
<text x="69" y="31.8" textLength="137" lengthAdjust="spacingAndGlyphs">Centro de Informações de Recursos</text>
<text x="69" y="39.8" textLength="137" lengthAdjust="spacingAndGlyphs">Ambientais e de Hidrometeorologia</text>
</g>
</g>
<!-- Agroconnect -->
<g fill="#fff">
<text x="9.5" y="78.3" font-family="'Liberation Sans',sans-serif" font-size="15.6" textLength="43.5" lengthAdjust="spacingAndGlyphs" style="text-shadow:0 1px 1px rgba(60,90,40,.5)">AGRO</text>
<text x="77.5" y="78.3" font-family="'Liberation Sans',sans-serif" font-size="15.6" font-weight="bold" font-style="italic" textLength="61" lengthAdjust="spacingAndGlyphs" style="text-shadow:0 1px 1px rgba(60,90,40,.5)">ONNECT</text>
<g style="filter:drop-shadow(0 1px .6px rgba(60,90,40,.5))">
<path d="M72.5 65.5 L59 72.5 L72.5 79.5" fill="none" stroke="#fff" stroke-width="2.6"/>
<circle cx="72.5" cy="65.3" r="4.4"/><circle cx="59.2" cy="72.5" r="4.4"/><circle cx="72.5" cy="79.7" r="4.4"/>
</g>
</g>
</svg>

</div>
<div id="toolbar">
<div class="cb" style="left:7.4px"></div><div class="cbl" style="left:24.4px">Santa Catarina</div>
<div class="cb" style="left:107.9px"></div><div class="cbl" style="left:124.6px">Epagri</div>
<div class="cb" style="left:167.4px"></div><div class="cbl" style="left:184px">Outras Instituições</div>
<div class="tb" style="left:665px;width:34px;top:4px;height:28px;background:#7bc97a;border-radius:1px"></div>
<div class="tb" style="left:705px;width:34px;top:4px;height:28px;border:1px solid #ececec"></div>
<div class="tb" style="left:746px;width:34px;top:4px;height:28px;border:1px solid #ececec"></div>
<div class="tb" style="left:785px;width:38px;top:4px;height:28px;border:1px solid #ececec"></div>
<div class="tb" style="left:829px;width:32px;top:4px;height:28px;border:1px solid #ececec"></div>
<svg class="abs" style="left:648px;top:0" width="224" height="36" viewBox="800 55 224 36">
<g fill="#575757">
<!-- list-alt -->
<path fill-rule="evenodd" d="M824.6 63.6 H843.4 A1.8 1.8 0 0 1 845.2 65.4 V78.6 A1.8 1.8 0 0 1 843.4 80.4 H824.6 A1.8 1.8 0 0 1 822.8 78.6 V65.4 A1.8 1.8 0 0 1 824.6 63.6 Z M824.4 68.2 V78.8 H843.6 V68.2 Z"/>
<path d="M826 70 h1.8 v1.5 h-1.8z M826 72.9 h1.8 v1.5 h-1.8z M826 75.8 h1.8 v1.5 h-1.8z M829.2 70 h12.8 v1.5 h-12.8z M829.2 72.9 h12.8 v1.5 h-12.8z M829.2 75.8 h12.8 v1.5 h-12.8z"/>
<!-- printer -->
<path d="M908.8 64.2 H918.5 L921 66.8 V71 H908.8Z" />
<path d="M910.3 65.7 H917.6 V67.8 H919.6 V71 H910.3Z" fill="#fff"/>
<path d="M906.5 70.6 H923.3 A2 2 0 0 1 925.3 72.6 V78 H921.2 V75.6 H908.6 V78 H904.5 V72.6 A2 2 0 0 1 906.5 70.6Z"/>
<path fill-rule="evenodd" d="M908.6 75.6 H921.2 V81.8 H908.6Z M910.2 77.2 V80.2 H919.6 V77.2Z"/>
<circle cx="922.6" cy="73.2" r=".8" fill="#fff"/>
<!-- newspaper -->
<path fill-rule="evenodd" d="M947.2 64.2 H968.8 V78.6 A1.7 1.7 0 0 1 967.1 80.3 H945.2 A2 2 0 0 1 943.2 78.3 V66 H947.2Z M948.7 65.7 V78.8 H967.3 V65.7Z M944.6 67.4 V78 A.7 .7 0 0 0 946 78 V67.4Z"/>
<path fill-rule="evenodd" d="M950.3 67.4 H957.6 V74.4 H950.3Z M951.7 68.8 V73 H956.2 V68.8Z"/>
<path d="M959 67.6 h6.8 v1.3 h-6.8z M959 70.3 h6.8 v1.3 h-6.8z M959 73 h6.8 v1.3 h-6.8z M950.3 75.8 h15.5 v1.3 h-15.5z"/>
<!-- info -->
<circle cx="997" cy="72.6" r="9.2"/>
<path d="M995.2 66 h3.7 v3 h-3.7z M994 70.6 h5 v6 h1.3 v2.3 h-6.6 v-2.3 h1.4 v-3.7 h-1.1z" fill="#fff"/>
<!-- text height -->
<path d="M882.7 63.2 L885.3 67 H883.5 V78.8 H885.3 L882.7 82.6 L880.1 78.8 H881.9 V67 H880.1Z"/>
</g>
<text x="862.4" y="81.6" font-family="'Liberation Serif',serif" font-size="26" font-weight="bold" fill="#575757" textLength="15.4" lengthAdjust="spacingAndGlyphs">T</text>
</svg>

</div>

<!-- SIDEBAR -->
<div id="side">
<div id="sidein">
<div class="abs" style="left:5.5px;top:-10px;width:137px;height:13.5px;background:#fff;border:1px solid #cfd8e3"></div>
<svg class="abs" style="left:9px;top:11.6px" width="10.5" height="8.5" viewBox="0 0 21 17"><path fill="#2c3e50" d="M10.5 0 L0 9.2 L1.4 10.8 L10.5 3 L19.6 10.8 L21 9.2 L17.2 5.9 V1 H14.6 V3.6Z M10.5 4.6 L3.6 10.5 V17 H8.6 V12 H12.4 V17 H17.4 V10.5Z"/></svg>
<div class="abs" style="left:23.4px;top:10.4px;font-size:9.12px;line-height:12px;color:#337ab7;white-space:nowrap">Página Inicial</div>
<svg class="abs" style="left:85.8px;top:12px" width="8.6" height="8.6" viewBox="0 0 18 18"><path fill="none" stroke="#2e6da4" stroke-width="2.8" d="M15.2 11.5 A6.8 6.8 0 1 1 13.8 4.2"/><path fill="#2e6da4" d="M17.6 0.6 V7.6 H10.6Z"/></svg>
<div class="abs" style="left:96px;top:10.4px;font-size:9.12px;line-height:12px;color:#337ab7;white-space:nowrap">Agora</div>
<div class="sec" style="top:37px;height:53px"><div class="bar" style="background:#f5002c"></div>
<div class="stitle" style="top:7.2px;color:#f01a3c">ATIVIDADE AGROPECUÁRIA</div>
<div class="abs" style="left:8px;top:24.4px;width:134.5px;height:25px;background:#fff;border:1px solid #d0d9e4;border-radius:1px"></div>
<div class="abs" style="left:17.8px;top:29px;font-size:10.64px;line-height:16px;color:#4d6a89;white-space:nowrap">Selecione ...</div>
<svg class="abs" style="left:131.6px;top:34px" width="8" height="6" viewBox="0 0 8 6"><path d="M1 1.2 L4 4.4 L7 1.2" fill="none" stroke="#34495e" stroke-width="1.3"/></svg>
</div>
<div class="sec" style="top:94px;height:154.2px"><div class="bar" style="background:#2c5f8a"></div>
<div class="stitle" style="top:6.6px;color:#2f6a99">VARIÁVEIS<br>METEOROLÓGICAS</div>
<div class="it" style="top:35.9px">· Temperatura (ºC)</div>
<div class="plus" style="top:35.3px">+</div>
<div class="it" style="top:52.8px">· Umidade Relativa (%)</div>
<div class="plus" style="top:52.2px">+</div>
<div class="it" style="top:69.4px">· Pressão Atmosférica (hPa)</div>
<div class="plus" style="top:68.8px">+</div>
<div class="it" style="top:86.1px">· Molhamento Total</div>
<div class="it" style="top:102.7px">· Radiação</div>
<div class="plus" style="top:102.1px">+</div>
<div class="it" style="top:119.6px">· Precipitação Total (mm)</div>
<div class="it" style="top:136.0px">· Vento (km/h)</div>
<div class="plus" style="top:135.4px">+</div>
</div>
<div class="sec" style="top:251.5px;height:300px"><div class="bar" style="background:#1fb3ae;z-index:3"></div>
<div class="abs" style="left:0;top:34.2px;width:147px;height:170.4px;background:#c3dcde"></div>
<div class="abs" style="left:.8px;top:1.9px;width:146.8px;height:32.6px;border:3px solid #e8192c"></div>
<div class="stitle" style="top:7.4px;color:#27a3a3">ÍNDICES<br>AGROMETEOROLÓGICOS</div>
<div class="it" style="top:36.6px">· Balanço Hídrico (mm)</div>
<svg class="abs" style="left:138.4px;top:39.3px" width="5" height="7" viewBox="0 0 5 7"><path d="M1 .8 L3.8 3.5 L1 6.2" fill="none" stroke="#444" stroke-width="1.3"/></svg>
<div class="radio" style="top:55.5px"></div>
<div class="rl" style="top:54.6px">ET0</div>
<div class="radio" style="top:74.2px"></div>
<div class="rl" style="top:73.3px">Armazenamento</div>
<div class="radio" style="top:92.9px"></div>
<div class="rl" style="top:92.0px">Negativo Acumulado</div>
<div class="radio" style="top:112.0px"></div>
<div class="rl" style="top:111.1px">Alteração Armazenamento</div>
<div class="radio" style="top:131.0px"></div>
<div class="rl" style="top:130.1px">Evapotranspiração Real</div>
<div class="radio" style="top:150.4px"><i></i></div>
<div class="rl" style="top:149.5px">ISNA</div>
<div class="radio" style="top:169.1px"></div>
<div class="rl" style="top:168.2px">Deficit</div>
<div class="radio" style="top:188.0px"></div>
<div class="rl" style="top:187.1px">Excesso</div>
<div class="it" style="top:207.0px">· Unidades Frio (Total)</div>
<div class="it" style="top:224.2px">· Horas Frio (Total)</div>
<div class="it" style="top:241.2px">· Graus Dia</div>
<div class="plus" style="top:240.6px">+</div>
<div class="it" style="top:257.6px">· Possíveis Geadas</div>
<div class="plus" style="top:257.0px">+</div>
<div class="it" style="top:273.7px">· Ciclo Precipitação Normal</div>
</div>
</div>
</div>

<!-- header V over sidebar -->
<svg class="abs" style="left:0;top:96px;z-index:6" width="156" height="16" viewBox="0 96 156 16"><path d="M0 96 H156 V97.3 H144 L72.5 109.6 L3 97.3 H0Z" fill="#8fbc57"/><path d="M66 96 V108.5 M20 97 L50 105 M95 97 L120 101" stroke="#7bb04f" stroke-width="1" fill="none"/></svg>
<!-- scrollbars -->
<div class="abs" style="left:147.5px;top:97px;width:8.5px;height:529px;background:#f7f7f7;z-index:4"></div>
<div class="abs" style="left:149.2px;top:122px;width:4.8px;height:328px;background:#7f7f7f;border-radius:2.4px;z-index:4"></div>
<svg class="abs" style="left:148px;top:617px;z-index:4" width="8" height="6" viewBox="0 0 8 6"><path d="M1 1 H7 L4 5Z" fill="#7f7f7f"/></svg>
<div class="abs" style="left:0;top:626px;width:156px;height:10px;background:#f1f1f1;z-index:4"></div>
<div class="abs" style="left:11.2px;top:628.6px;width:122.6px;height:5.6px;background:#7f7f7f;border-radius:2.8px;z-index:4"></div>
<svg class="abs" style="left:3px;top:628.4px;z-index:4" width="4" height="6" viewBox="0 0 4 6"><path d="M3.6 .4 V5.6 L.4 3Z" fill="#555"/></svg>
<svg class="abs" style="left:139.6px;top:628.4px;z-index:4" width="4" height="6" viewBox="0 0 4 6"><path d="M.4 .4 V5.6 L3.6 3Z" fill="#555"/></svg>
<div class="abs" style="left:0;top:636px;width:1024px;height:4px;background:#f0f0f0;z-index:8"></div>
<!-- collapse handle -->
<div class="abs" style="left:148.5px;top:219.6px;width:17.5px;height:37.5px;background:#f4f4f4;border-radius:0 2px 2px 0;box-shadow:0 1px 2px rgba(0,0,0,.3);z-index:5"></div>
<svg class="abs" style="left:154.6px;top:231.8px;z-index:6" width="7" height="12" viewBox="0 0 7 12"><path d="M6.4 .6 V11.4 L.6 6Z" fill="#555"/></svg>

<!-- red arrow annotation -->
<svg class="abs" style="left:64px;top:492px;z-index:6" width="62" height="30" viewBox="64 492 62 30"><path d="M68.6 506.3 L94.6 496.6 V500.9 H120 V511 H94.600 V516.2 Z" fill="none" stroke="#e81a2b" stroke-width="2.3" stroke-linejoin="miter"/></svg>
<!-- leaflet search -->
<div class="abs" style="left:164px;top:100px;width:24.6px;height:23.4px;background:#fff;border:1px solid #bbb;border-radius:1px;z-index:2"></div>
<svg class="abs" style="left:169.6px;top:104.8px;z-index:2" width="13.4" height="13.4" viewBox="0 0 20 20"><circle cx="8" cy="8" r="5.6" fill="none" stroke="#111" stroke-width="3"/><path d="M12.3 12.3 L18 18" stroke="#111" stroke-width="3.6" stroke-linecap="round"/></svg>
<!-- scale -->
<div class="abs" style="left:160.3px;top:552.3px;width:70px;height:11.6px;background:rgba(255,255,255,.55);border:1.5px solid #777;border-top:none;z-index:2;font-size:8.36px;line-height:11.8px;color:#333;padding-left:4px">100 km</div>
<div class="abs" style="left:160.3px;top:562.6px;width:56px;height:13.6px;background:rgba(255,255,255,.55);border:1.5px solid #777;border-bottom:none;z-index:2;font-size:8.36px;line-height:12.5px;color:#333;padding-left:4px">50 mi</div>
<!-- zoom -->
<div class="abs" style="left:164.2px;top:579.6px;width:24.6px;height:47.8px;background:#fff;border:1px solid #bbb;border-radius:1.5px;z-index:2"></div>
<div class="abs" style="left:165px;top:603px;width:23px;height:1px;background:#ccc;z-index:2"></div>
<svg class="abs" style="left:171.4px;top:586.6px;z-index:2" width="11" height="36" viewBox="0 0 11 36"><path d="M.4 5.5 H10.400 M5.4 .5 V10.5 M.8 28.8 H10" stroke="#111" stroke-width="2" fill="none"/></svg>
<!-- attribution -->
<div class="abs" style="left:801px;top:622.6px;width:223px;height:13.4px;background:rgba(255,255,255,.75);z-index:2;font-size:8.37px;line-height:13px;color:#333;padding-left:3.4px;white-space:nowrap"><span style="color:#0078a8">Leaflet</span> | Dados © <span style="color:#0078a8">OpenStreetMap</span> contributors, <span style="color:#0078a8">CC-BY-SA</span></div>

<!-- LEGEND -->
<div id="legend">
<div class="abs" style="left:0;top:-2px;width:167px;height:1px;background:#555"></div>
<div class="abs" style="left:0;top:-1px;width:167px;height:1px;background:#7db548"></div>
<svg class="abs" style="left:59.6px;top:6.8px" width="19" height="19" viewBox="0 0 62 62">
<circle cx="32.5" cy="9.2" r="8.3" fill="#d81e1a"/>
<g fill="none" stroke-width="3.4">
<path d="M6.3 13.2 C20 14.5 33 20 44.5 30.5" stroke="#1f9a48"/><path d="M6.3 19.2 C18 20.5 29 25 39.5 33.8" stroke="#e0352b"/><path d="M6.3 25.2 C16 26.5 25 30 33.8 37" stroke="#1f9a48"/>
<path d="M35.5 19.3 C42 16 48 14 56 13.2" stroke="#1f9a48"/><path d="M40.6 23.8 C46 21.5 50 20 56.5 19.2" stroke="#e0352b"/><path d="M46.3 27.8 C50 26.5 53 25.8 56.5 25.2" stroke="#1f9a48"/>
</g>
<text x="5.5" y="49" font-family="'DejaVu Sans','Liberation Sans',sans-serif" font-weight="bold" font-size="13" fill="#1f9a48" textLength="52" lengthAdjust="spacingAndGlyphs">Epagri</text>
</svg>
<div class="abs" style="left:82.3px;top:10.7px;font-size:10.64px;font-weight:bold;color:#333;line-height:14px">ISNA</div>
<svg class="abs" style="left:46px;top:40px" width="9.8" height="10.4" viewBox="0 0 19 20"><path fill="#444" fill-rule="evenodd" d="M1.5 2.8 H17.5 A1.5 1.5 0 0 1 19 4.3 V18.5 A1.5 1.5 0 0 1 17.5 20 H1.5 A1.5 1.5 0 0 1 0 18.500 V4.3 A1.5 1.5 0 0 1 1.5 2.8Z M1.6 7.2 V18.4 H17.4 V7.2Z"/><path fill="#444" d="M3.6 0 h2.8 v5 h-2.8z M12.6 0 h2.8 v5 h-2.8z M3 8.6 h3.4 v2.6 h-3.4z M7.8 8.6 h3.4 v2.6 h-3.4z M12.6 8.6 h3.4 v2.6 h-3.4z M3 12 h3.4 v2.6 h-3.4z M7.8 12 h3.4 v2.6 h-3.4z M12.6 12 h3.4 v2.6 h-3.4z M3 15.4 h3.4 v2.4 h-3.4z M7.8 15.4 h3.4 v2.400 h-3.4z M12.6 15.400 h3.4 v2.4 h-3.4z"/></svg>
<div class="abs" style="left:59.2px;top:39.4px;font-size:8.74px;color:#333;line-height:12px;white-space:nowrap">15 Janeiro 2026</div>
<div class="lc" style="top:58.2px;background:#ee14ee"></div><div class="lt" style="top:57.3px">0,7</div>
<div class="lc" style="top:73.5px;background:#00008c"></div><div class="lt" style="top:72.7px">0,8</div>
<div class="lc" style="top:88.7px;background:#0a9612"></div><div class="lt" style="top:87.9px">0,8</div>
<div class="lc" style="top:103.9px;background:#ffff00"></div><div class="lt" style="top:103.1px">0,9</div>
<div class="lc" style="top:119.1px;background:#ff6a0a"></div><div class="lt" style="top:118.3px">0,9</div>
<div class="lc" style="top:134.5px;background:#cc0a0a"></div><div class="lt" style="top:133.7px">1</div>
<svg class="abs" style="left:8.9px;top:150.3px" width="12" height="11" viewBox="0 0 12 11"><path d="M6 0 L12 11 H0Z" fill="#000"/></svg>
<div class="lt" style="top:149.1px;left:22.4px">Outras Instituições</div>

</div>

</div>
</body>
</html>
